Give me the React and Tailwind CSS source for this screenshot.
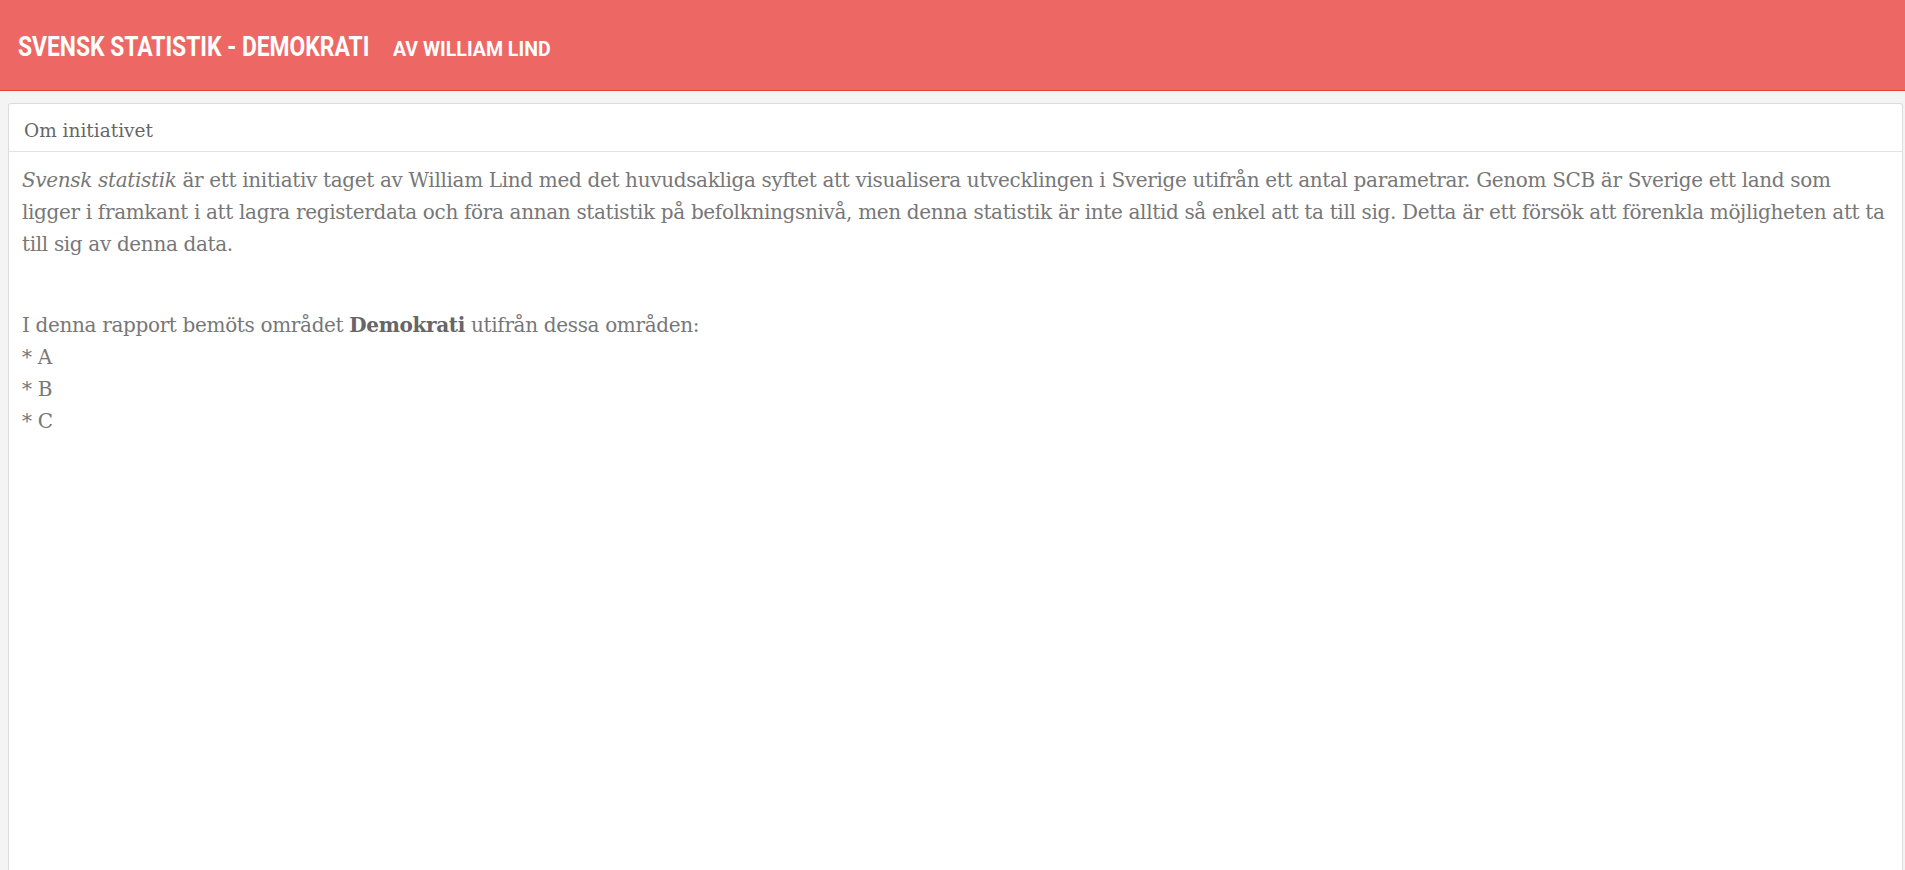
import React from "react";

const serif = "font-['DejaVu_Serif',serif]";

const Header = () => (
  <header className="h-[91px] shrink-0 bg-[#ed6864] border-b border-[#e8413e]">
    <div className="flex items-baseline pt-[33px] pl-[18px] text-white font-['Roboto',sans-serif] font-bold uppercase">
      <span className="inline-block w-[375px]">
        <span className="inline-block origin-left scale-x-[0.816] whitespace-nowrap text-[28px] leading-[28px]">
          Svensk statistik - Demokrati
        </span>
      </span>
      <span className="inline-block">
        <span className="inline-block origin-left scale-x-[0.93] whitespace-nowrap text-[21px] leading-[28px]">
          av William Lind
        </span>
      </span>
    </div>
  </header>
);

const App = () => {
  return (
    <div className="h-[870px] overflow-hidden flex flex-col bg-[#f4f4f4]">
      <Header />
      <main className="flex-1 flex flex-col pt-3 pl-2 pr-[2px]">
        <div className={`flex-1 flex flex-col overflow-hidden bg-white border-x border-t border-[#dcdcdc] rounded-t-[3px] ${serif}`}>
          <div className="pl-[15px] pt-[15px] pb-[8px] border-b border-[#e2e2e2] text-[18.5px] leading-[24px] text-[#666]">
            Om initiativet
          </div>
          <div className="pl-[13px] pr-[4px] pt-[12px] text-[20px] leading-[32px] tracking-[-0.34px] text-[#777]">
            <p className="mb-[49px] whitespace-nowrap">
              <i>Svensk statistik</i> är ett initiativ taget av William Lind med det huvudsakliga syftet att
              visualisera utvecklingen i Sverige utifrån ett antal parametrar. Genom SCB är Sverige ett land som
              <br />
              ligger i framkant i att lagra registerdata och föra annan statistik på befolkningsnivå, men denna
              statistik är inte alltid så enkel att ta till sig. Detta är ett försök att förenkla möjligheten att ta
              <br />
              till sig av denna data.
            </p>
            <p>
              I denna rapport bemöts området <b className="text-[#666]">Demokrati</b> utifrån dessa områden:
              <br />* A
              <br />* B
              <br />* C
            </p>
          </div>
        </div>
      </main>
    </div>
  );
};

export default App;
